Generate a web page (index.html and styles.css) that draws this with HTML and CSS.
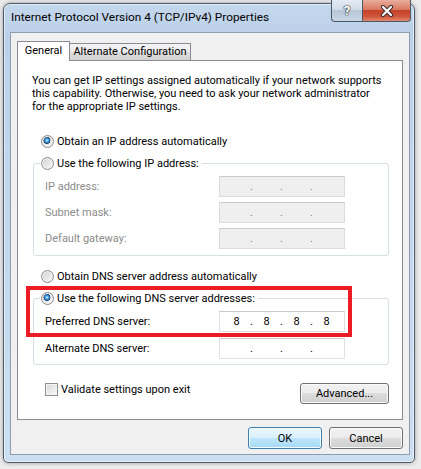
FILE: index.html
```html
<!DOCTYPE html>
<html>
<head>
<meta charset="utf-8">
<link rel="stylesheet" href="styles.css">
</head>
<body>
<div class="window">
  <div class="titlebar">
    <span class="title">Internet Protocol Version 4 (TCP/IPv4) Properties</span>
    <div class="caption">
      <div class="cbtn help">?</div>
      <div class="cbtn close">
        <svg width="16" height="12" viewBox="0 0 16 12">
          <path d="M4 2 L12 10 M12 2 L4 10" stroke="#3b2a2a" stroke-width="4.2" stroke-linecap="round" fill="none"/>
          <path d="M4 2 L12 10 M12 2 L4 10" stroke="#ffffff" stroke-width="2.2" stroke-linecap="round" fill="none"/>
        </svg>
      </div>
    </div>
  </div>
  <div class="client">
    <div class="tabs">
      <div class="tab active">General</div>
      <div class="tab">Alternate Configuration</div>
    </div>
    <div class="panel">
      <p class="desc">You can get IP settings assigned automatically if your network supports<br>this capability. Otherwise, you need to ask your network administrator<br>for the appropriate IP settings.</p>
      <div class="opt first"><span class="radio on"></span><span>Obtain an IP address automatically</span></div>
      <fieldset class="group g1">
        <legend><span class="radio"></span><span>Use the following IP address:</span></legend>
        <div class="fields">
          <span class="lbl dis">IP address:</span>
          <div class="ip dis"><span class="oct"></span><span class="dot">.</span><span class="oct"></span><span class="dot">.</span><span class="oct"></span><span class="dot">.</span><span class="oct"></span></div>
          <span class="lbl dis">Subnet mask:</span>
          <div class="ip dis"><span class="oct"></span><span class="dot">.</span><span class="oct"></span><span class="dot">.</span><span class="oct"></span><span class="dot">.</span><span class="oct"></span></div>
          <span class="lbl dis">Default gateway:</span>
          <div class="ip dis"><span class="oct"></span><span class="dot">.</span><span class="oct"></span><span class="dot">.</span><span class="oct"></span><span class="dot">.</span><span class="oct"></span></div>
        </div>
      </fieldset>
      <div class="opt third"><span class="radio"></span><span>Obtain DNS server address automatically</span></div>
      <fieldset class="group g2">
        <legend><span class="radio on"></span><span>Use the following DNS server addresses:</span></legend>
        <div class="fields wide">
          <span class="lbl">Preferred DNS server:</span>
          <div class="ip"><span class="oct">8</span><span class="dot">.</span><span class="oct">8</span><span class="dot">.</span><span class="oct">8</span><span class="dot">.</span><span class="oct">8</span></div>
          <span class="lbl">Alternate DNS server:</span>
          <div class="ip"><span class="oct"></span><span class="dot">.</span><span class="oct"></span><span class="dot">.</span><span class="oct"></span><span class="dot">.</span><span class="oct"></span></div>
        </div>
      </fieldset>
      <div class="bottom">
        <label class="chk"><span class="check"></span><span>Validate settings upon exit</span></label>
        <button class="btn adv">Advanced...</button>
      </div>
    </div>
    <div class="footer">
      <button class="btn ok">OK</button>
      <button class="btn">Cancel</button>
    </div>
  </div>
</div>
<div class="highlight"></div>
</body>
</html>
```

FILE: styles.css
```css
* { box-sizing: border-box; }
html, body { margin: 0; padding: 0; }
body {
  width: 421px;
  height: 469px;
  overflow: hidden;
  position: relative;
  background: #ececec;
  font-family: Roboto, "Liberation Sans", sans-serif;
  font-size: 11px;
  color: #000;
}
.window {
  margin: 3px 0 0 3px;
  width: 412px;
  height: 460px;
  border: 1px solid #4e5c6d;
  border-radius: 7px 7px 5px 5px;
  background: linear-gradient(#c4d7ec, #bcd1e9 28px, #c5d8ee 60%, #cddff2);
  box-shadow: 0 0 4px rgba(0,0,0,0.35), inset 0 0 0 1px rgba(255,255,255,0.55);
  display: flex;
  flex-direction: column;
}
.titlebar {
  height: 28px;
  flex: none;
  display: flex;
  justify-content: space-between;
  align-items: flex-start;
  padding-left: 7px;
}
.title {
  font-size: 11.8px;
  line-height: 26px;
  color: #000;
}
.caption {
  display: flex;
  margin-top: -4px;
  margin-right: 3px;
}
.cbtn {
  height: 22px;
  border: 1px solid #4b586a;
  border-top: none;
  display: flex;
  align-items: center;
  justify-content: center;
}
.help {
  width: 32px;
  border-radius: 0 0 0 4px;
  background: linear-gradient(#e3eaf3, #d3dde9 45%, #b7c6d8 50%, #c8d6e6);
  color: #fff;
  font-weight: bold;
  font-size: 13px;
  text-shadow: 0 0 1px #2c3440, 0 0 1px #2c3440, 0 0 2px #2c3440;
}
.close {
  width: 49px;
  margin-left: -1px;
  border-radius: 0 0 4px 0;
  background: linear-gradient(#e9ad9c, #d97a62 45%, #c5432a 50%, #cf553a 78%, #e48a6c);
}
.client {
  flex: 1;
  margin: 0 4px 7px 6px;
  border: 1px solid #8d9cae;
  background: #f0f0f0;
  padding: 8px 6px 0;
  display: flex;
  flex-direction: column;
}
.tabs {
  display: flex;
  height: 19px;
  flex: none;
}
.tab {
  border: 1px solid #898c95;
  border-bottom: none;
  text-align: center;
  white-space: nowrap;
}
.tab.active {
  width: 53px;
  height: 20px;
  line-height: 18px;
  background: #fff;
  position: relative;
  z-index: 1;
}
.tab:not(.active) {
  width: 122px;
  height: 17px;
  margin-top: 2px;
  margin-left: -1px;
  line-height: 15px;
  background: linear-gradient(#f3f3f3, #ebebeb 50%, #dddddd 50%, #d3d3d3);
}
.panel {
  height: 360px;
  flex: none;
  border: 1px solid #898c95;
  background: #fff;
  padding: 13px 13px 15px 15px;
  display: flex;
  flex-direction: column;
}
.desc {
  margin: 0 0 0 -1px;
  white-space: nowrap;
  line-height: 13px;
}
.opt {
  display: flex;
  align-items: center;
  gap: 3px;
  height: 16px;
  padding-left: 8px;
}
.opt.first { margin-top: 20px; }
.opt.third { margin-top: 12px; }
.radio {
  width: 13px;
  height: 13px;
  flex: none;
  border-radius: 50%;
  border: 1px solid #8a8b8c;
  background: linear-gradient(135deg, #d2d2d2, #f9f9f9);
  box-shadow: inset 0 0 0 1px #f2f2f2;
}
.radio.on {
  background:
    radial-gradient(circle at 45% 40%, #c8edff 0, #4aa8ea 1.6px, #1a5a9c 2.9px, #2a3f58 3.3px, rgba(0,0,0,0) 3.7px),
    linear-gradient(135deg, #d2d2d2, #f9f9f9);
}
.group {
  margin: 6px 0 0 0;
  border: 1px solid #d5dfe5;
  border-radius: 3px;
  padding: 0 43px 6px 11px;
  min-width: 0;
}
.group.g2 { padding-bottom: 5px; }
.group legend {
  display: flex;
  align-items: center;
  gap: 3px;
  height: 16px;
  margin-left: -5px;
  padding: 0 3px 0 1px;
}
.fields {
  display: grid;
  grid-template-columns: 174px 126px;
  grid-auto-rows: 21px;
  row-gap: 5px;
  align-items: center;
  margin-top: 5px;
}
.fields.wide { row-gap: 6px; }
.lbl.dis { color: #8b8b8b; }
.ip {
  height: 21px;
  display: flex;
  align-items: center;
  padding-left: 5px;
  background: #fff;
  border: 1px solid #dfe1e5;
  border-top-color: #c6c8cc;
  font-size: 11px;
}
.ip.dis {
  background: #efefef;
  border-color: #dcdcdc;
  border-top-color: #cacaca;
  color: #7c7c92;
}
.oct { width: 23px; text-align: center; }
.dot { width: 7px; text-align: center; }
.bottom {
  margin-top: 18px;
  display: flex;
  justify-content: space-between;
  align-items: flex-start;
  padding-left: 12px;
}
.chk {
  display: flex;
  align-items: center;
  gap: 3px;
  height: 13px;
}
.check {
  width: 13px;
  height: 13px;
  flex: none;
  border: 1px solid #8e8f8f;
  background: linear-gradient(135deg, #d8d8d8, #fafafa);
  box-shadow: inset 0 0 0 1px #f4f4f4;
}
.btn {
  font: inherit;
  color: #000;
  height: 22px;
  width: 74px;
  padding: 0;
  border: 1px solid #707070;
  border-radius: 3px;
  background: linear-gradient(#f2f2f2, #ebebeb 50%, #dddddd 50%, #cfcfcf);
  box-shadow: inset 0 0 0 1px #fbfbfb;
}
.btn.adv {
  width: 89px;
  height: 21px;
}
.btn.ok {
  border-color: #3c7fb1;
  background: linear-gradient(#eaf6fd, #d9f0fc 50%, #bee6fd 50%, #a7d9f5);
  box-shadow: inset 0 0 0 1px #f4fbff;
}
.footer {
  margin-top: 7px;
  display: flex;
  justify-content: flex-end;
  gap: 7px;
}
.highlight {
  position: absolute;
  left: 26px;
  top: 286px;
  width: 326px;
  height: 51px;
  border: 4px solid #ed1c24;
}
```
